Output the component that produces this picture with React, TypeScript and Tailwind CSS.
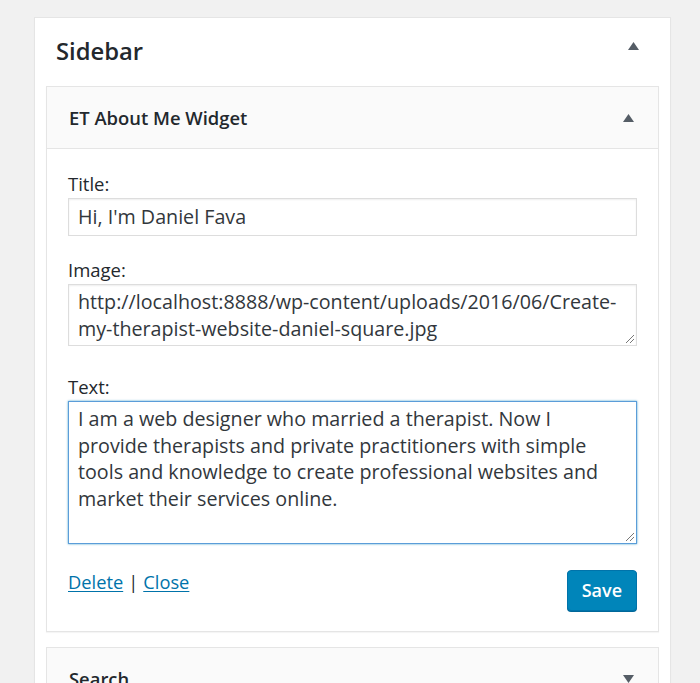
const font = { fontFamily: '"Open Sans", "Noto Sans", sans-serif' };

function Arrow({ up = true, className = "" }: { up?: boolean; className?: string }) {
  return (
    <svg width="11" height="8" viewBox="0 0 11 8" className={`text-[#555d66] ${className}`}>
      {up ? <polygon points="0,8 5.5,0 11,8" fill="currentColor" /> : <polygon points="0,0 5.5,8 11,0" fill="currentColor" />}
    </svg>
  );
}

function Grip() {
  return (
    <svg width="9" height="9" viewBox="0 0 9 9" className="absolute bottom-[2px] right-[2px]">
      <line x1="1" y1="9" x2="9" y2="1" stroke="#777" strokeWidth="1" />
      <line x1="5" y1="9" x2="9" y2="5" stroke="#777" strokeWidth="1" />
    </svg>
  );
}

function Field({ label, children, className = "" }: { label: string; children: React.ReactNode; className?: string }) {
  return (
    <div className={className}>
      <div className="text-[18.5px] leading-[24px] text-[#23282d]">{label}</div>
      <div className="mt-[2px]">{children}</div>
    </div>
  );
}

export default function App() {
  return (
    <div className="h-[683px] overflow-hidden bg-[#f1f1f1] pt-[17px] pl-[34px] pr-[29px]" style={font}>
      <div className="bg-white border border-[#e5e5e5] shadow-[0_1px_1px_rgba(0,0,0,0.04)] h-[700px] px-[11px]">
        <div className="flex items-center justify-between h-[64px] pl-[10px] pr-[20px]">
          <h2 className="text-[23.8px] font-semibold text-[#23282d] pt-[3px]">Sidebar</h2>
          <Arrow className="mb-[8px]" />
        </div>

        <div className="mt-[4px] border border-[#e5e5e5] shadow-[0_1px_1px_rgba(0,0,0,0.04)]">
          <div className="flex items-center justify-between h-[62px] bg-[#fafafa] border-b border-[#e5e5e5] pl-[22px] pr-[24px]">
            <h3 className="text-[18.4px] font-semibold text-[#23282d]">ET About Me Widget</h3>
            <Arrow />
          </div>
          <div className="px-[21px] pt-[23px] pb-[20px]">
            <Field label="Title:">
              <div className="h-[38px] border border-[#ddd] shadow-[inset_0_1px_2px_rgba(0,0,0,0.07)] px-[9px] flex items-center text-[19.7px] text-[#32373c]">
                Hi, I'm Daniel Fava
              </div>
            </Field>

            <Field label="Image:" className="mt-[22px]">
              <div className="relative h-[62px] border border-[#ddd] shadow-[inset_0_1px_2px_rgba(0,0,0,0.07)] px-[9px] pt-[4px] text-[19.7px] leading-[26.5px] text-[#32373c] whitespace-nowrap">
                http://localhost:8888/wp-content/uploads/2016/06/Create-
                <br />
                my-therapist-website-daniel-square.jpg
                <Grip />
              </div>
            </Field>

            <Field label="Text:" className="mt-[29px]">
              <div className="relative h-[143px] border border-[#5b9dd9] shadow-[0_0_2px_rgba(30,140,190,0.8)] px-[9px] pt-[4px] text-[19.7px] leading-[26.7px] text-[#32373c] whitespace-nowrap">
                I am a web designer who married a therapist. Now I
                <br />
                provide therapists and private practitioners with simple
                <br />
                tools and knowledge to create professional websites and
                <br />
                market their services online.
                <Grip />
              </div>
            </Field>

            <div className="flex items-start justify-between mt-[26px]">
              <div className="text-[18.3px] leading-[24px] text-[#23282d]">
                <a href="#" className="text-[#0073aa] underline underline-offset-2">Delete</a>
                <span className="mx-[5px]">|</span>
                <a href="#" className="text-[#0073aa] underline underline-offset-2">Close</a>
              </div>
              <button className="h-[41px] px-[14px] bg-[#0085ba] border border-[#0073aa] rounded-[4px] shadow-[0_1px_0_#006799] text-white text-[18px] font-semibold">
                Save
              </button>
            </div>
          </div>
        </div>

        <div className="mt-[15px] border border-[#e5e5e5] bg-[#fafafa]">
          <div className="flex items-center justify-between h-[62px] pl-[22px] pr-[24px]">
            <h3 className="text-[18.4px] font-semibold text-[#23282d]">Search</h3>
            <Arrow up={false} />
          </div>
        </div>
      </div>
    </div>
  );
}
